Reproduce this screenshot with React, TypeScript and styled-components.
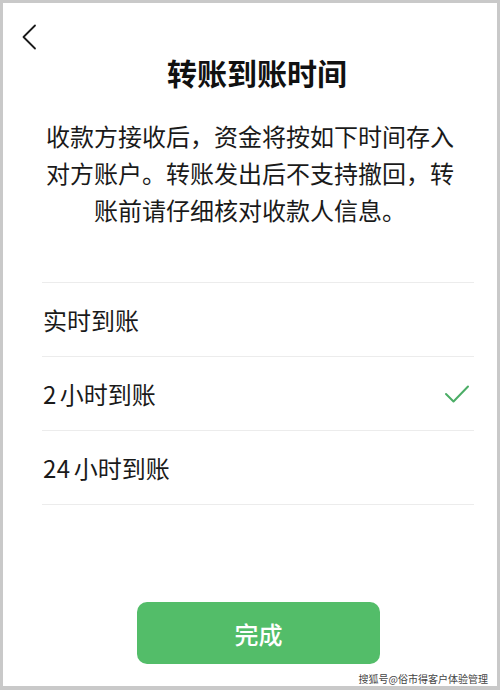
import React from "react";
import styled, { createGlobalStyle } from "styled-components";

const GlobalStyle = createGlobalStyle`
  html, body {
    margin: 0;
    padding: 0;
    background: #fff;
  }
  body {
    font-family: "Noto Sans CJK SC", "Noto Sans", sans-serif;
    color: #1a1a1a;
  }
`;

type Option = {
  hours?: string;
  label: string;
  checked?: boolean;
};

const options: Option[] = [
  { label: "实时到账" },
  { hours: "2", label: "小时到账", checked: true },
  { hours: "24", label: "小时到账" },
];

const App = () => {
  return (
    <>
      <GlobalStyle />
      <Frame>
        <Header>
          <BackButton aria-label="返回">
            <svg width="16" height="26" viewBox="0 0 16 26" fill="none">
              <path
                d="M14 1.5 L2.5 13 L14 24.5"
                stroke="#1a1a1a"
                strokeWidth="1.8"
                strokeLinecap="round"
                strokeLinejoin="round"
              />
            </svg>
          </BackButton>
        </Header>
        <Title>转账到账时间</Title>
        <Desc>
          收款方接收后，资金将按如下时间存入
          <br />
          对方账户。转账发出后不支持撤回，转
          <br />
          账前请仔细核对收款人信息。
        </Desc>
        <OptionList>
          {options.map((o) => (
            <OptionRow key={(o.hours || "") + o.label}>
              <OptionLabel>
                {o.hours && <Hours>{o.hours}</Hours>}
                {o.label}
              </OptionLabel>
              {o.checked && (
                <svg width="26" height="20" viewBox="0 0 26 20" fill="none">
                  <path
                    d="M2 10 L9.5 17.5 L24 2.5"
                    stroke="#4bad66"
                    strokeWidth="2"
                    strokeLinecap="round"
                    strokeLinejoin="round"
                  />
                </svg>
              )}
            </OptionRow>
          ))}
        </OptionList>
        <DoneButton>完成</DoneButton>
        <Watermark>搜狐号@俗市得客户体验管理</Watermark>
      </Frame>
    </>
  );
};

const Frame = styled.div`
  position: relative;
  box-sizing: border-box;
  width: 500px;
  height: 690px;
  border: 3px solid #c9c9c9;
  border-bottom-width: 4px;
  background: #fff;
  display: flex;
  flex-direction: column;
  overflow: hidden;
`;

const Header = styled.div`
  display: flex;
  align-items: center;
  height: 26px;
  padding: 21px 0 0 18px;
`;

const BackButton = styled.div`
  display: flex;
  align-items: center;
  cursor: pointer;
`;

const Title = styled.h1`
  margin: 2px 0 0;
  padding-left: 14px;
  font-size: 30px;
  line-height: 40px;
  font-weight: 700;
  text-align: center;
  color: #111;
`;

const Desc = styled.p`
  margin: 25px 0 0;
  font-size: 24px;
  line-height: 37px;
  text-align: center;
  color: #1a1a1a;
`;

const OptionList = styled.div`
  margin: 54px 23px 0 39px;
  border-top: 1px solid #ececec;
`;

const OptionRow = styled.div`
  display: flex;
  align-items: center;
  justify-content: space-between;
  height: 73px;
  padding: 0 4px 0 1px;
  border-bottom: 1px solid #ececec;
  cursor: pointer;
`;

const OptionLabel = styled.span`
  font-size: 24px;
  color: #1a1a1a;
`;

const Hours = styled.span`
  margin-right: 3px;
  letter-spacing: 0.5px;
`;

const DoneButton = styled.button`
  align-self: flex-start;
  margin: 97px 0 0 134px;
  width: 243px;
  height: 62px;
  border: none;
  border-radius: 10px;
  background: #53bd69;
  color: #fff;
  font-family: "Noto Sans CJK SC", "Noto Sans", sans-serif;
  font-size: 24px;
  font-weight: 500;
  cursor: pointer;
`;

const Watermark = styled.span`
  position: absolute;
  right: 9px;
  bottom: 0px;
  font-size: 10px;
  line-height: 14px;
  color: #444;
  text-shadow: 0 0 2px #fff, 0 0 1px #fff;
`;

export default App;
